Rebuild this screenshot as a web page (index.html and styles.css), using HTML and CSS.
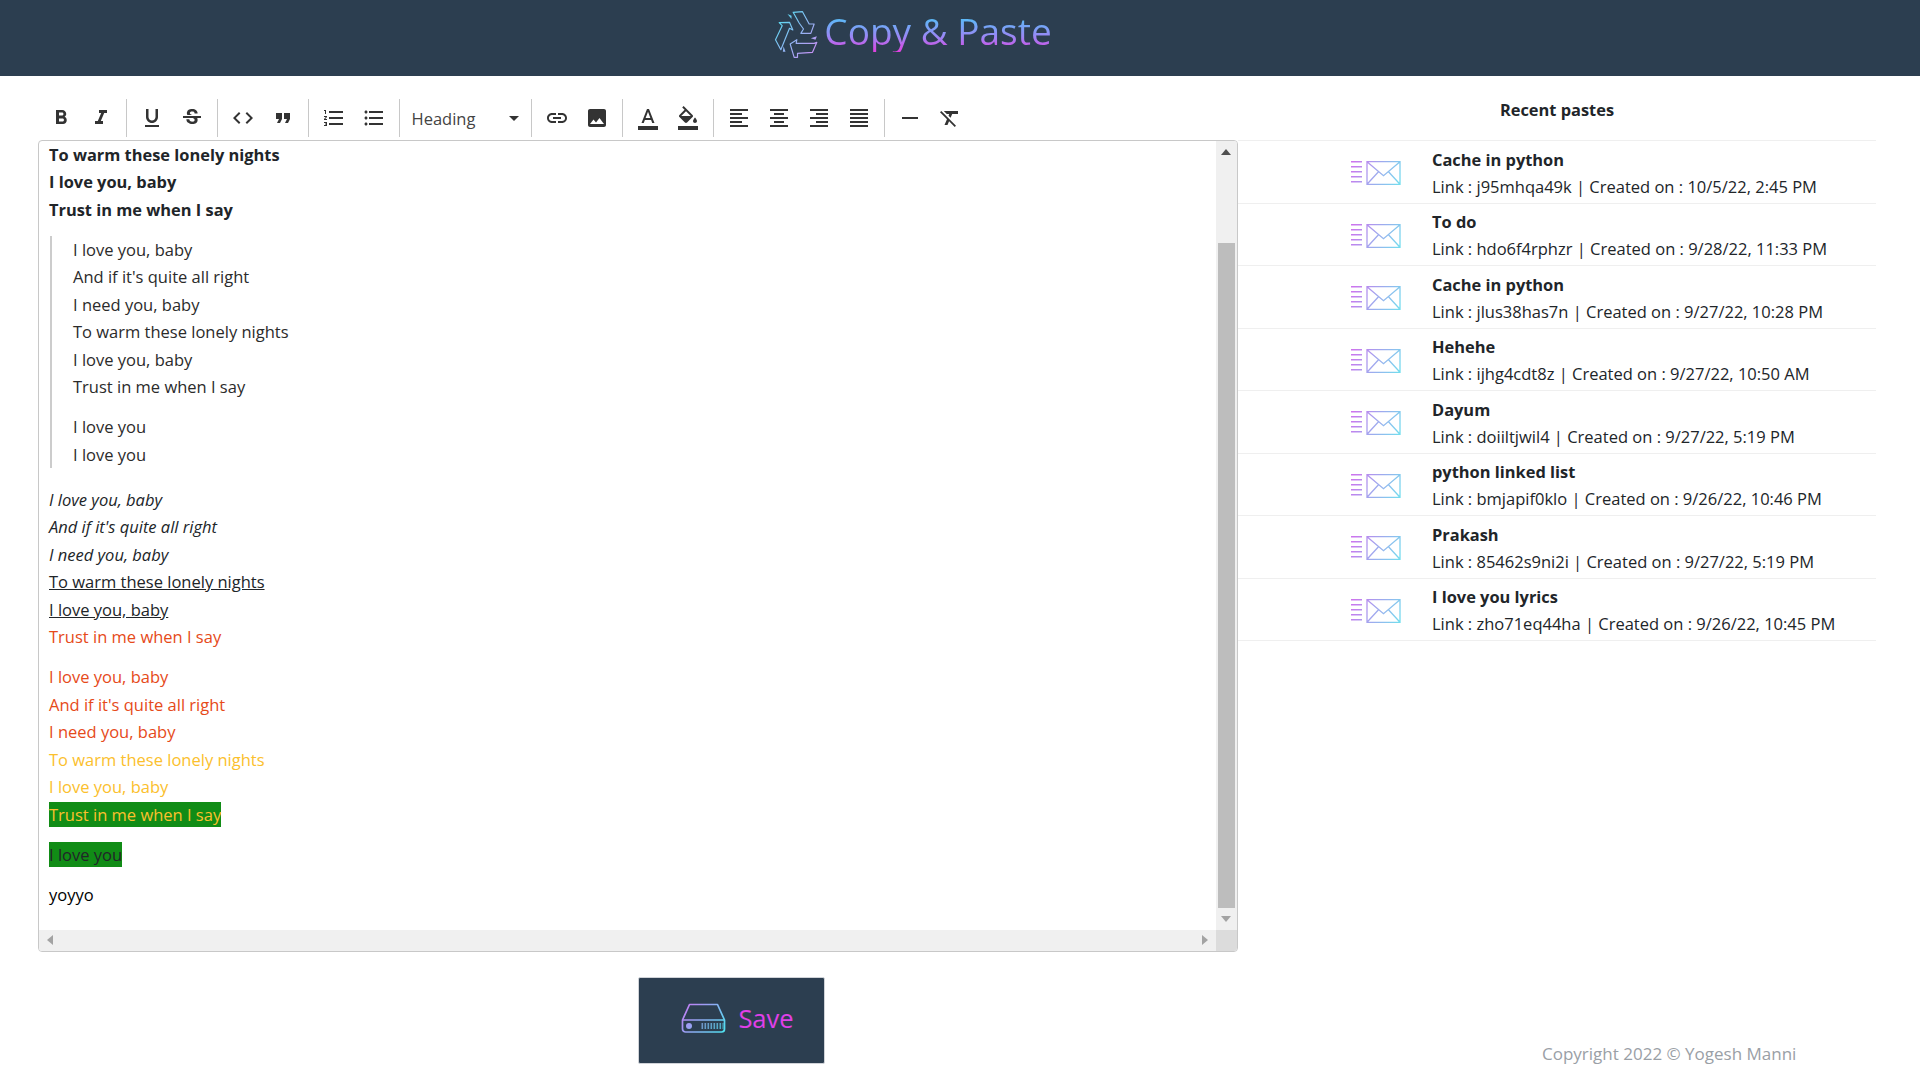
FILE: index.html
```html
<!DOCTYPE html>
<html lang="en">
<head>
    <meta charset="UTF-8">
    <title>Copy &amp; Paste</title>
    <link rel="stylesheet" href="styles.css">
</head>
<body>
    <svg class="defs" width="0" height="0">
        <defs>
            <linearGradient id="logoGrad" gradientUnits="userSpaceOnUse" x1="0" y1="20" x2="130" y2="140">
                <stop offset="0" stop-color="#4de3f0"/>
                <stop offset="1" stop-color="#d08af5"/>
            </linearGradient>
            <linearGradient id="mailGrad" gradientUnits="userSpaceOnUse" x1="0" y1="0" x2="50" y2="24">
                <stop offset="0" stop-color="#d070ee"/>
                <stop offset="1" stop-color="#70e0ee"/>
            </linearGradient>
            <linearGradient id="driveGrad" gradientUnits="userSpaceOnUse" x1="4" y1="0" x2="42" y2="30">
                <stop offset="0" stop-color="#c878f5"/>
                <stop offset="1" stop-color="#50e0f0"/>
            </linearGradient>
            <symbol id="mail" viewBox="0 0 50 24">
                <path d="M0 .8h11M0 5.8h11M0 10.8h11M0 15.8h11M0 20.8h11" fill="none" stroke="url(#mailGrad)" stroke-width="1.6"/>
                <path d="M16 .7h33v22.6H16zM16 .7l16.5 14L49 .7M16 23.3l11.5-12.5M49 23.3L37.5 10.8" fill="none" stroke="url(#mailGrad)" stroke-width="1.3"/>
            </symbol>
        </defs>
    </svg>

    <header class="topbar">
        <svg class="logo" viewBox="0 0 140 150" width="47" height="50">
            <g fill="none" stroke="url(#logoGrad)" stroke-width="3.5" stroke-linejoin="round">
                <path d="M57 10L85 8L105 45L120 45L110 73L80 73L88 60L75 42Z"/>
                <path d="M15 41L46 40L56 63L46 58L20 122L4 92L24 50Z"/>
                <path d="M48 105L68 92L66 103L120 103L128 100L115 130L70 133L70 145L60 145Z"/>
            </g>
            <g fill="url(#logoGrad)">
                <path d="M40 15L52 20L52 30Z"/>
                <path d="M110 88L128 82L124 92Z"/>
                <path d="M28 112L34 128L26 128Z"/>
            </g>
        </svg>
        <h1 class="brand">Copy &amp; Paste</h1>
    </header>

    <div class="page">
        <main class="left">
            <div class="toolbar">
                <div class="tool-group">
                    <button class="tool"><svg viewBox="0 0 24 24"><path d="M15.6 10.79c.97-.67 1.65-1.77 1.65-2.79 0-2.26-1.75-4-4-4H7v14h7.04c2.09 0 3.71-1.7 3.71-3.79 0-1.52-.86-2.82-2.15-3.42zM10 6.5h3c.83 0 1.5.67 1.5 1.5s-.67 1.5-1.5 1.5h-3v-3zm3.5 9H10v-3h3.5c.83 0 1.5.67 1.5 1.5s-.67 1.5-1.5 1.5z"/></svg></button>
                    <button class="tool"><svg viewBox="0 0 24 24"><path d="M10 4v3h2.21l-3.42 8H6v3h8v-3h-2.21l3.42-8H18V4z"/></svg></button>
                </div>
                <div class="tool-group">
                    <button class="tool"><svg viewBox="0 0 24 24"><path d="M12 17c3.31 0 6-2.69 6-6V3h-2.5v8c0 1.93-1.57 3.5-3.5 3.5S8.5 12.93 8.5 11V3H6v8c0 3.31 2.69 6 6 6zm-7 2v2h14v-2H5z"/></svg></button>
                    <button class="tool"><svg viewBox="0 0 24 24"><path d="M7.24 8.75c-.26-.48-.39-1.03-.39-1.67 0-.61.13-1.16.4-1.67.26-.5.63-.93 1.11-1.29.48-.35 1.05-.63 1.7-.83.66-.19 1.39-.29 2.18-.29.81 0 1.54.11 2.21.34.66.22 1.23.54 1.69.94.47.4.83.88 1.08 1.43.25.55.38 1.15.38 1.81h-3.01c0-.31-.05-.59-.15-.85-.09-.27-.24-.49-.44-.68-.2-.19-.45-.33-.75-.44-.3-.1-.66-.16-1.06-.16-.39 0-.74.04-1.03.13-.29.09-.53.21-.72.36-.19.16-.34.34-.44.55-.1.21-.15.43-.15.66 0 .48.25.88.74 1.21.38.25.77.48 1.41.7H7.39c-.05-.08-.11-.17-.15-.25zM21 12v-2H3v2h9.62c.18.07.4.14.55.2.37.17.66.34.87.51.21.17.35.36.43.57.07.2.11.43.11.69 0 .23-.05.45-.14.66-.09.2-.23.38-.42.53-.19.15-.42.26-.71.35-.29.08-.63.13-1.01.13-.43 0-.83-.04-1.18-.13s-.66-.23-.91-.42c-.25-.19-.45-.44-.59-.75-.14-.31-.25-.76-.25-1.21H6.4c0 .55.08 1.13.24 1.58.16.45.37.85.65 1.21.28.35.6.66.98.92.37.26.78.48 1.22.65.44.17.9.3 1.38.39.48.08.96.13 1.44.13.8 0 1.53-.09 2.18-.28s1.21-.45 1.67-.79c.46-.34.82-.77 1.07-1.27s.38-1.07.38-1.71c0-.6-.1-1.14-.31-1.61-.05-.11-.11-.23-.17-.33H21z"/></svg></button>
                </div>
                <div class="tool-group">
                    <button class="tool"><svg viewBox="0 0 24 24"><path d="M9.4 16.6L4.8 12l4.6-4.6L8 6l-6 6 6 6 1.4-1.4zm5.2 0l4.6-4.6-4.6-4.6L16 6l6 6-6 6-1.4-1.4z"/></svg></button>
                    <button class="tool"><svg viewBox="0 0 24 24"><path d="M6 17h3l2-4V7H5v6h3zm8 0h3l2-4V7h-6v6h3z"/></svg></button>
                </div>
                <div class="tool-group">
                    <button class="tool"><svg viewBox="0 0 24 24"><path d="M2 17h2v.5H3v1h1v.5H2v1h3v-4H2v1zm1-9h1V4H2v1h1v3zm-1 3h1.8L2 13.1v.9h3v-1H3.2L5 10.9V10H2v1zm5-6v2h14V5H7zm0 14h14v-2H7v2zm0-6h14v-2H7v2z"/></svg></button>
                    <button class="tool"><svg viewBox="0 0 24 24"><path d="M4 10.5c-.83 0-1.5.67-1.5 1.5s.67 1.5 1.5 1.5 1.5-.67 1.5-1.5-.67-1.5-1.5-1.5zm0-6c-.83 0-1.5.67-1.5 1.5S3.17 7.5 4 7.5 5.5 6.83 5.5 6 4.83 4.5 4 4.5zm0 12c-.83 0-1.5.68-1.5 1.5s.68 1.5 1.5 1.5 1.5-.68 1.5-1.5-.67-1.5-1.5-1.5zM7 19h14v-2H7v2zm0-6h14v-2H7v2zm0-8v2h14V5H7z"/></svg></button>
                </div>
                <div class="tool-group">
                    <div class="heading-select">
                        <span>Heading</span>
                        <i class="caret"></i>
                    </div>
                </div>
                <div class="tool-group">
                    <button class="tool"><svg viewBox="0 0 24 24"><path d="M3.9 12c0-1.71 1.39-3.1 3.1-3.1h4V7H7c-2.76 0-5 2.24-5 5s2.24 5 5 5h4v-1.9H7c-1.71 0-3.1-1.39-3.1-3.1zM8 13h8v-2H8v2zm9-6h-4v1.9h4c1.71 0 3.1 1.39 3.1 3.1s-1.39 3.1-3.1 3.1h-4V17h4c2.76 0 5-2.24 5-5s-2.24-5-5-5z"/></svg></button>
                    <button class="tool"><svg viewBox="0 0 24 24"><path d="M21 19V5c0-1.1-.9-2-2-2H5c-1.1 0-2 .9-2 2v14c0 1.1.9 2 2 2h14c1.1 0 2-.9 2-2zM8.5 13.5l2.5 3.01L14.5 12l4.5 6H5l3.5-4.5z"/></svg></button>
                </div>
                <div class="tool-group">
                    <button class="tool"><svg viewBox="0 0 24 24"><path d="M2 20h20v4H2z"/><path d="M11 3L5.5 17h2.25l1.12-3h6.25l1.12 3h2.25L13 3h-2zm-1.38 9L12 5.67 14.38 12H9.62z"/></svg></button>
                    <button class="tool"><svg viewBox="0 0 24 24"><path d="M16.56 8.94L7.62 0 6.21 1.41l2.38 2.38-5.15 5.15c-.59.59-.59 1.54 0 2.12l5.5 5.5c.29.29.68.44 1.06.44s.77-.15 1.06-.44l5.5-5.5c.59-.58.59-1.53 0-2.12zM5.21 10L10 5.21 14.79 10H5.21zM19 11.5s-2 2.17-2 3.5c0 1.1.9 2 2 2s2-.9 2-2c0-1.33-2-3.5-2-3.5z"/><path d="M2 20h20v4H2z"/></svg></button>
                </div>
                <div class="tool-group">
                    <button class="tool"><svg viewBox="0 0 24 24"><path d="M15 15H3v2h12v-2zm0-8H3v2h12V7zM3 13h18v-2H3v2zm0 8h18v-2H3v2zM3 3v2h18V3H3z"/></svg></button>
                    <button class="tool"><svg viewBox="0 0 24 24"><path d="M7 15v2h10v-2H7zm-4 6h18v-2H3v2zm0-8h18v-2H3v2zm4-6v2h10V7H7zM3 3v2h18V3H3z"/></svg></button>
                    <button class="tool"><svg viewBox="0 0 24 24"><path d="M3 21h18v-2H3v2zm6-4h12v-2H9v2zm-6-4h18v-2H3v2zm6-4h12V7H9v2zM3 3v2h18V3H3z"/></svg></button>
                    <button class="tool"><svg viewBox="0 0 24 24"><path d="M3 21h18v-2H3v2zm0-4h18v-2H3v2zm0-4h18v-2H3v2zm0-4h18V7H3v2zm0-6v2h18V3H3z"/></svg></button>
                </div>
                <div class="tool-group last">
                    <button class="tool"><svg viewBox="0 0 24 24"><path d="M4 11h16v2H4z"/></svg></button>
                    <button class="tool"><svg viewBox="0 0 24 24"><path d="M3.27 5L2 6.27l6.97 6.97L6.5 19h3l1.57-3.66L16.73 21 18 19.73 3.55 5.27 3.27 5zM6 5v.18L8.82 8h2.4l-.72 1.68 2.1 2.1L14.21 8H20V5H6z"/></svg></button>
                </div>
            </div>

            <div class="editor">
                <div class="editor-content">
                    <p class="bold">To warm these lonely nights<br>I love you, baby<br>Trust in me when I say</p>
                    <blockquote>
                        <p>I love you, baby<br>And if it's quite all right<br>I need you, baby<br>To warm these lonely nights<br>I love you, baby<br>Trust in me when I say</p>
                        <p>I love you<br>I love you</p>
                    </blockquote>
                    <p><em>I love you, baby<br>And if it's quite all right<br>I need you, baby</em><br><u>To warm these lonely nights<br>I love you, baby</u><br><span class="red">Trust in me when I say</span></p>
                    <p><span class="red">I love you, baby<br>And if it's quite all right<br>I need you, baby</span><br><span class="yellow">To warm these lonely nights<br>I love you, baby<br><mark class="green">Trust in me when I say</mark></span></p>
                    <p><mark class="green">I love you</mark></p>
                    <p class="plain">yoyyo</p>
                </div>
                <div class="scroll-v">
                    <i class="arrow up"></i>
                    <div class="thumb"></div>
                    <i class="arrow down"></i>
                </div>
                <div class="scroll-h">
                    <i class="arrow left-arrow"></i>
                    <i class="arrow right-arrow"></i>
                </div>
                <div class="scroll-corner"></div>
            </div>

            <div class="save-row">
                <button class="save-btn">
                    <svg viewBox="0 0 46 30" width="47" height="30">
                        <g fill="none" stroke="url(#driveGrad)" stroke-width="1.7" stroke-linejoin="round">
                            <path d="M9 1.5H37L44 17V26a3 3 0 0 1-3 3H5a3 3 0 0 1-3-3V17Z"/>
                            <path d="M2 17H44"/>
                        </g>
                        <circle cx="8.5" cy="23" r="3" fill="url(#driveGrad)"/>
                        <path d="M21 21h22M21 23h22M21 25h22" stroke="url(#driveGrad)" stroke-width="1.3" stroke-dasharray="1.6 1.4" fill="none"/>
                    </svg>
                    <span>Save</span>
                </button>
            </div>
        </main>

        <aside class="right">
            <h2 class="recent-title">Recent pastes</h2>
            <ul class="paste-list">
                <li class="paste">
                    <svg class="mail-icon"><use href="#mail"/></svg>
                    <div><b>Cache in python</b><span>Link : j95mhqa49k | Created on : 10/5/22, 2:45 PM</span></div>
                </li>
                <li class="paste">
                    <svg class="mail-icon"><use href="#mail"/></svg>
                    <div><b>To do</b><span>Link : hdo6f4rphzr | Created on : 9/28/22, 11:33 PM</span></div>
                </li>
                <li class="paste">
                    <svg class="mail-icon"><use href="#mail"/></svg>
                    <div><b>Cache in python</b><span>Link : jlus38has7n | Created on : 9/27/22, 10:28 PM</span></div>
                </li>
                <li class="paste">
                    <svg class="mail-icon"><use href="#mail"/></svg>
                    <div><b>Hehehe</b><span>Link : ijhg4cdt8z | Created on : 9/27/22, 10:50 AM</span></div>
                </li>
                <li class="paste">
                    <svg class="mail-icon"><use href="#mail"/></svg>
                    <div><b>Dayum</b><span>Link : doiiltjwil4 | Created on : 9/27/22, 5:19 PM</span></div>
                </li>
                <li class="paste">
                    <svg class="mail-icon"><use href="#mail"/></svg>
                    <div><b>python linked list</b><span>Link : bmjapif0klo | Created on : 9/26/22, 10:46 PM</span></div>
                </li>
                <li class="paste">
                    <svg class="mail-icon"><use href="#mail"/></svg>
                    <div><b>Prakash</b><span>Link : 85462s9ni2i | Created on : 9/27/22, 5:19 PM</span></div>
                </li>
                <li class="paste">
                    <svg class="mail-icon"><use href="#mail"/></svg>
                    <div><b>I love you lyrics</b><span>Link : zho71eq44ha | Created on : 9/26/22, 10:45 PM</span></div>
                </li>
            </ul>
            <footer class="copyright">Copyright 2022 © Yogesh Manni</footer>
        </aside>
    </div>
</body>
</html>
```

FILE: styles.css
```css
:root {
    --navy: #2c3e50;
    --text: #212529;
    --line: #c8c8c8;
    --track: #f0f0f0;
}
* {
    box-sizing: border-box;
}
html, body {
    height: 100%;
}
body {
    margin: 0;
    background: #fff;
    color: var(--text);
    font-family: "Open Sans", "Noto Sans", Arial, sans-serif;
    font-size: 16.5px;
    overflow: hidden;
}
.defs {
    position: absolute;
}
.topbar {
    height: 76px;
    background: var(--navy);
    display: flex;
    justify-content: center;
    align-items: flex-start;
    padding: 9px 94px 0 0;
    gap: 3px;
}
.brand {
    margin: 0;
    font-size: 37px;
    font-weight: 400;
    line-height: 43px;
    background: linear-gradient(180deg, #4fc3f7 15%, #9b86f5 65%, #e23fe0 100%);
    -webkit-background-clip: text;
    background-clip: text;
    color: transparent;
}
.page {
    display: flex;
    height: 1004px;
}
.left {
    width: 1238px;
    padding-left: 38px;
    flex: none;
}
.toolbar {
    display: flex;
    height: 64px;
    padding: 23px 0 0 2.5px;
}
.tool-group {
    display: flex;
    align-items: center;
    height: 38px;
    padding-right: 5px;
    margin-right: 5px;
    border-right: 1px solid var(--line);
}
.tool-group.last {
    border-right: none;
}
.tool {
    width: 40px;
    height: 38px;
    padding: 0;
    border: none;
    background: none;
    display: flex;
    align-items: center;
    justify-content: center;
}
.tool svg {
    width: 24px;
    height: 24px;
    fill: #333;
}
.heading-select {
    width: 121px;
    display: flex;
    justify-content: space-between;
    align-items: center;
    padding: 0 0 0 7px;
    color: #444;
}
.caret {
    width: 0;
    height: 0;
    margin-right: 7px;
    border-left: 5px solid transparent;
    border-right: 5px solid transparent;
    border-top: 5px solid #333;
}
.editor {
    height: 812px;
    border: 1px solid var(--line);
    border-radius: 4px;
    display: grid;
    grid-template-columns: 1fr 21px;
    grid-template-rows: 1fr 21px;
    overflow: hidden;
}
.editor-content {
    padding: 0 10px;
    margin-top: -.5px;
    overflow: hidden;
}
.editor-content p {
    margin: 0 0 12.5px;
    line-height: 27.5px;
}
.editor-content blockquote {
    margin: 12px 0 17.5px 1px;
    padding-left: 21px;
    border-left: 2px solid #ccc;
    color: #2b2b2b;
}
.editor-content blockquote p:last-child {
    margin-bottom: 0;
}
.bold {
    font-weight: 700;
    font-size: 16.4px;
}
.red {
    color: #e64a19;
}
.yellow {
    color: #fbc02d;
}
.green {
    background: #118c16;
    color: inherit;
    padding: 1px 0;
}
.editor-content > p:last-child {
    color: #000;
}
.scroll-v {
    background: var(--track);
    position: relative;
}
.thumb {
    position: absolute;
    left: 2px;
    right: 2px;
    top: 102px;
    bottom: 22px;
    background: #bdbdbd;
}
.scroll-h {
    background: var(--track);
    position: relative;
}
.scroll-corner {
    background: #dcdcdc;
}
.arrow {
    position: absolute;
    width: 0;
    height: 0;
    display: block;
}
.up {
    left: 5px;
    top: 8px;
    border-left: 5px solid transparent;
    border-right: 5px solid transparent;
    border-bottom: 6px solid #505050;
}
.down {
    left: 5px;
    bottom: 8px;
    border-left: 5px solid transparent;
    border-right: 5px solid transparent;
    border-top: 6px solid #a3a3a3;
}
.left-arrow {
    left: 8px;
    top: 5px;
    border-top: 5px solid transparent;
    border-bottom: 5px solid transparent;
    border-right: 6px solid #a3a3a3;
}
.right-arrow {
    right: 8px;
    top: 5px;
    border-top: 5px solid transparent;
    border-bottom: 5px solid transparent;
    border-left: 6px solid #a3a3a3;
}
.save-row {
    padding: 25px 0 0 600px;
}
.save-btn {
    width: 187px;
    height: 87px;
    border: 1px solid #d0d3d8;
    border-radius: 2px;
    background: var(--navy);
    display: flex;
    align-items: center;
    justify-content: center;
    gap: 11px;
    padding: 0 0 6px 11px;
    font-family: inherit;
    font-size: 25.5px;
    color: #e040e8;
}
.right {
    flex: 1;
    display: flex;
    flex-direction: column;
    padding-right: 44px;
}
.recent-title {
    margin: 0;
    height: 64px;
    padding-top: 22px;
    text-align: center;
    font-size: 16.4px;
    line-height: 24px;
    font-weight: 700;
}
.paste-list {
    list-style: none;
    margin: 0;
    padding: 0;
    border-top: 1px solid #efefef;
}
.paste {
    height: 62.5px;
    display: flex;
    align-items: center;
    padding: 2px 0 0 113px;
    border-bottom: 1px solid #efefef;
    line-height: 27px;
}
.mail-icon {
    width: 50px;
    height: 24px;
    margin: 1px 31px 0 0;
    flex: none;
}
.paste b {
    display: block;
    font-weight: 700;
    font-size: 16.4px;
}
.paste span {
    display: block;
}
.copyright {
    margin-top: auto;
    padding: 0 0 15px 304px;
    font-size: 17px;
    color: #9aa0a6;
}
```
